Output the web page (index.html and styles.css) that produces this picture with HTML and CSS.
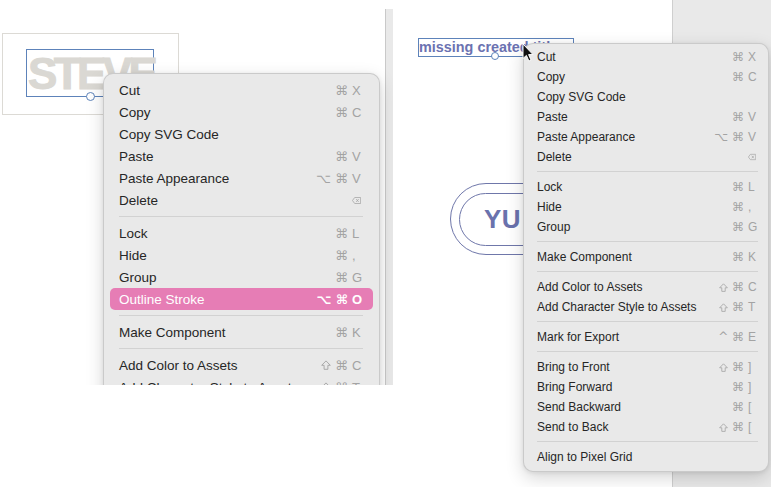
FILE: index.html
```html
<!DOCTYPE html>
<html>
<head>
<meta charset="utf-8">
<link rel="stylesheet" href="styles.css">
</head>
<body>
<div class="shot shot-left">
  <div class="frame"></div>
  <div class="sel sel-steve"><span class="steve">STEVE</span></div>
  <div class="handle handle-steve"></div>
  <div class="strip"></div>

  <div class="menu menu-left">
    <div class="item"><span>Cut</span><span class="sc"><span class="mods">⌘</span><span class="key">X</span></span></div>
    <div class="item"><span>Copy</span><span class="sc"><span class="mods">⌘</span><span class="key">C</span></span></div>
    <div class="item"><span>Copy SVG Code</span></div>
    <div class="item"><span>Paste</span><span class="sc"><span class="mods">⌘</span><span class="key">V</span></span></div>
    <div class="item"><span>Paste Appearance</span><span class="sc"><span class="mods">⌥ ⌘</span><span class="key">V</span></span></div>
    <div class="item"><span>Delete</span><span class="sc"><span class="key del"><svg viewBox="0 0 12 9" width="12" height="9"><path d="M3.6 0.5 H11.5 V8.5 H3.6 L0.6 4.5 Z" fill="none" stroke="currentColor" stroke-width="1"/><path d="M5.6 2.6 L8.9 6.4 M8.9 2.6 L5.6 6.4" stroke="currentColor" stroke-width="1"/></svg></span></span></div>
    <div class="sep"></div>
    <div class="item"><span>Lock</span><span class="sc"><span class="mods">⌘</span><span class="key">L</span></span></div>
    <div class="item"><span>Hide</span><span class="sc"><span class="mods">⌘</span><span class="key">,</span></span></div>
    <div class="item"><span>Group</span><span class="sc"><span class="mods">⌘</span><span class="key">G</span></span></div>
    <div class="item active"><span>Outline Stroke</span><span class="sc"><span class="mods">⌥ ⌘</span><span class="key">O</span></span></div>
    <div class="sep"></div>
    <div class="item"><span>Make Component</span><span class="sc"><span class="mods">⌘</span><span class="key">K</span></span></div>
    <div class="sep"></div>
    <div class="item"><span>Add Color to Assets</span><span class="sc"><span class="mods"><svg class="shift" viewBox="0 0 10 10" width="10" height="10"><path d="M5 0.9 L9.3 5.3 H6.9 V9.3 H3.1 V5.3 H0.7 Z" fill="none" stroke="currentColor" stroke-width="0.9" stroke-linejoin="round"/></svg> ⌘</span><span class="key">C</span></span></div>
    <div class="item"><span>Add Character Style to Assets</span><span class="sc"><span class="mods"><svg class="shift" viewBox="0 0 10 10" width="10" height="10"><path d="M5 0.9 L9.3 5.3 H6.9 V9.3 H3.1 V5.3 H0.7 Z" fill="none" stroke="currentColor" stroke-width="0.9" stroke-linejoin="round"/></svg> ⌘</span><span class="key">T</span></span></div>
    <div class="sep"></div>
    <div class="item"><span>Mark for Export</span><span class="sc"><span class="mods">^ ⌘</span><span class="key">E</span></span></div>
  </div>
</div>

<div class="shot shot-right">
  <div class="side"></div>
  <div class="sel sel-text"><span class="missing">missing created title</span></div>
  <div class="handle handle-text"></div>
  <div class="pill-outer"><div class="pill-inner"><span class="yu">YU</span></div></div>

  <div class="menu menu-right">
    <div class="item"><span>Cut</span><span class="sc"><span class="mods">⌘</span><span class="key">X</span></span></div>
    <div class="item"><span>Copy</span><span class="sc"><span class="mods">⌘</span><span class="key">C</span></span></div>
    <div class="item"><span>Copy SVG Code</span></div>
    <div class="item"><span>Paste</span><span class="sc"><span class="mods">⌘</span><span class="key">V</span></span></div>
    <div class="item"><span>Paste Appearance</span><span class="sc"><span class="mods">⌥ ⌘</span><span class="key">V</span></span></div>
    <div class="item"><span>Delete</span><span class="sc"><span class="key del"><svg viewBox="0 0 12 9" width="11" height="8"><path d="M3.6 0.5 H11.5 V8.5 H3.6 L0.6 4.5 Z" fill="none" stroke="currentColor" stroke-width="1"/><path d="M5.6 2.6 L8.9 6.4 M8.9 2.6 L5.6 6.4" stroke="currentColor" stroke-width="1"/></svg></span></span></div>
    <div class="sep"></div>
    <div class="item"><span>Lock</span><span class="sc"><span class="mods">⌘</span><span class="key">L</span></span></div>
    <div class="item"><span>Hide</span><span class="sc"><span class="mods">⌘</span><span class="key">,</span></span></div>
    <div class="item"><span>Group</span><span class="sc"><span class="mods">⌘</span><span class="key">G</span></span></div>
    <div class="sep"></div>
    <div class="item"><span>Make Component</span><span class="sc"><span class="mods">⌘</span><span class="key">K</span></span></div>
    <div class="sep"></div>
    <div class="item"><span>Add Color to Assets</span><span class="sc"><span class="mods"><svg class="shift" viewBox="0 0 10 10" width="9" height="9"><path d="M5 0.9 L9.3 5.3 H6.9 V9.3 H3.1 V5.3 H0.7 Z" fill="none" stroke="currentColor" stroke-width="0.9" stroke-linejoin="round"/></svg> ⌘</span><span class="key">C</span></span></div>
    <div class="item"><span>Add Character Style to Assets</span><span class="sc"><span class="mods"><svg class="shift" viewBox="0 0 10 10" width="9" height="9"><path d="M5 0.9 L9.3 5.3 H6.9 V9.3 H3.1 V5.3 H0.7 Z" fill="none" stroke="currentColor" stroke-width="0.9" stroke-linejoin="round"/></svg> ⌘</span><span class="key">T</span></span></div>
    <div class="sep"></div>
    <div class="item"><span>Mark for Export</span><span class="sc"><span class="mods">^ ⌘</span><span class="key">E</span></span></div>
    <div class="sep"></div>
    <div class="item"><span>Bring to Front</span><span class="sc"><span class="mods"><svg class="shift" viewBox="0 0 10 10" width="9" height="9"><path d="M5 0.9 L9.3 5.3 H6.9 V9.3 H3.1 V5.3 H0.7 Z" fill="none" stroke="currentColor" stroke-width="0.9" stroke-linejoin="round"/></svg> ⌘</span><span class="key">]</span></span></div>
    <div class="item"><span>Bring Forward</span><span class="sc"><span class="mods">⌘</span><span class="key">]</span></span></div>
    <div class="item"><span>Send Backward</span><span class="sc"><span class="mods">⌘</span><span class="key">[</span></span></div>
    <div class="item"><span>Send to Back</span><span class="sc"><span class="mods"><svg class="shift" viewBox="0 0 10 10" width="9" height="9"><path d="M5 0.9 L9.3 5.3 H6.9 V9.3 H3.1 V5.3 H0.7 Z" fill="none" stroke="currentColor" stroke-width="0.9" stroke-linejoin="round"/></svg> ⌘</span><span class="key">[</span></span></div>
    <div class="sep"></div>
    <div class="item"><span>Align to Pixel Grid</span></div>
  </div>

  <svg class="cursor" viewBox="0 0 12 19" width="12" height="19"><path d="M1 1 L1 15.5 L4.4 12.4 L6.9 18 L9 17.1 L6.6 11.6 L11 11.6 Z" fill="#111" stroke="#fff" stroke-width="1" stroke-linejoin="round"/></svg>
</div>
</body>
</html>
```

FILE: styles.css
```css
* { box-sizing: border-box; }
html, body { margin: 0; padding: 0; background: #fff; }
body {
  display: flex;
  align-items: flex-start;
  width: 771px;
  height: 487px;
  overflow: hidden;
  font-family: "Liberation Sans", "DejaVu Sans", sans-serif;
  color: #262626;
}

.shot { position: relative; overflow: hidden; background: #fff; flex: none; }
.shot-left { width: 393px; height: 385px; }
.shot-right { width: 378px; height: 487px; }

/* ---------- left canvas ---------- */
.frame {
  position: absolute; left: 2px; top: 33px; width: 177px; height: 82px;
  border: 1px solid #dcdad5;
}
.sel { position: absolute; border: 1px solid #5d83ba; }
.sel-steve { left: 26px; top: 49px; width: 128px; height: 48px; }
.steve {
  position: absolute; left: 1px; top: 0px;
  font-family: "Liberation Sans", sans-serif; font-weight: 700;
  font-size: 44px; letter-spacing: -3.6px; line-height: 48px;
  color: #dad8d3;
  -webkit-text-stroke: 1px #dad8d3;
}
.handle {
  position: absolute; width: 9px; height: 9px; border-radius: 50%;
  background: #fff; border: 1px solid #5d83ba;
}
.handle-steve { left: 86px; top: 92px; }
.strip {
  position: absolute; left: 385px; top: 9px; width: 8px; bottom: 0;
  background: #e9e9e9; border-left: 1px solid #c9c9c9;
}

/* ---------- menus ---------- */
.menu {
  position: absolute;
  background: #e9e9e9;
  border: 1px solid rgba(0,0,0,0.13);
  border-radius: 10px;
  box-shadow: 0 6px 18px rgba(0,0,0,0.16), 0 1px 4px rgba(0,0,0,0.08);
  display: flex; flex-direction: column;
}
.menu > * { flex: none; }
.item { display: flex; align-items: center; justify-content: space-between; white-space: nowrap; border-radius: 5px; }
.sc { display: flex; align-items: center; color: #a3a3a3; }
.mods { font-family: "DejaVu Sans", sans-serif; text-align: right; display: flex; align-items: center; white-space: pre; }
.shift { display: block; }
.key { text-align: left; font-family: "Liberation Sans", sans-serif; }
.key.del { display: flex; align-items: center; }
.sep { border-top: 1px solid #d2d2d2; }

.menu-left { left: 103px; top: 73px; width: 277px; height: 340px; padding-top: 5px; font-size: 13.5px; }
.menu-left .item { height: 22px; margin: 0 6px; padding: 0 12px 0 9px; }
.menu-left .mods { font-size: 13px; margin-right: 4px; }
.menu-left .key { width: 9px; font-size: 13px; }
.menu-left .sep { margin: 5px 16px 5px 15px; }
.menu-left .item.active { background: #e67db5; color: #fff; }
.menu-left .item.active .sc { color: #fff; font-weight: 700; }

.menu-right { left: 130px; top: 43px; width: 246px; height: 429px; padding: 3px 0 5px; font-size: 12px; }
.menu-right .item { height: 20px; margin: 0 5px; padding: 0 7px 0 8px; }
.menu-right .mods { font-size: 12px; margin-right: 4px; }
.menu-right .key { width: 8px; font-size: 12px; }
.menu-right .sep { margin: 4px 10px 5px 13px; }

/* ---------- right canvas ---------- */
.side {
  position: absolute; left: 279px; top: 0; right: 0; bottom: 0;
  background: #e9e9e9; border-left: 1px solid #cfcfcf;
}
.sel-text { left: 25px; top: 38px; width: 156px; height: 19px; overflow: hidden; }
.missing {
  position: absolute; left: 0; top: -1px; white-space: nowrap;
  font-weight: 700; font-size: 14.4px; line-height: 19px; color: #6b72b1;
}
.handle-text { left: 98px; top: 52px; width: 8px; height: 8px; }
.pill-outer {
  position: absolute; left: 57px; top: 183px; width: 260px; height: 72px;
  border: 1.5px solid #6f77aa; border-radius: 36px;
  display: flex; align-items: center; padding-left: 8px;
}
.pill-inner {
  width: 240px; height: 53px; border: 1.5px solid #6f77aa; border-radius: 27px;
  display: flex; align-items: center; padding-left: 24px;
}
.yu { font-weight: 700; font-size: 26px; color: #6a72ad; letter-spacing: 0.5px; }
.cursor { position: absolute; left: 129px; top: 43px; }
```
